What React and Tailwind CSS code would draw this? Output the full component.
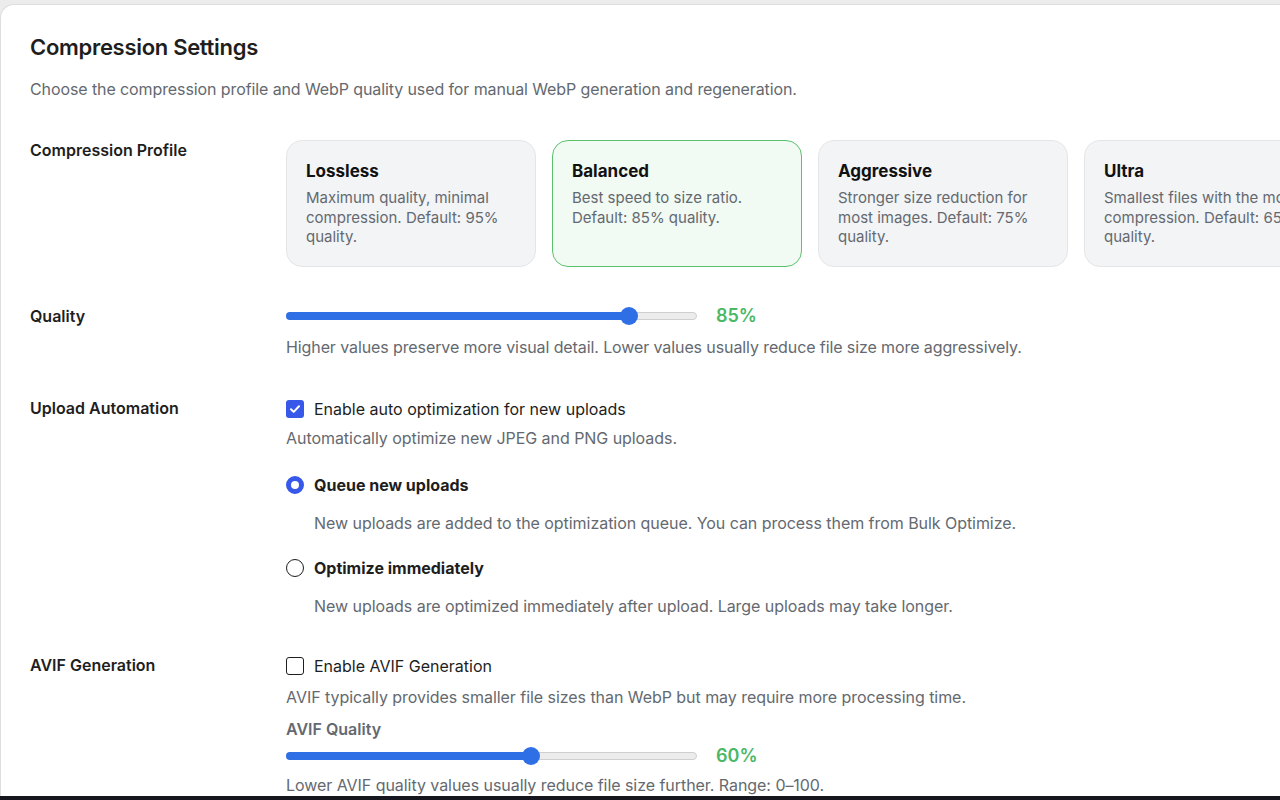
import React from "react";

const font = { fontFamily: "Inter, 'Noto Sans', 'Liberation Sans', sans-serif" };

function Slider({ value }) {
  const pos = 9 + (value / 100) * 393;
  return (
    <div className="flex items-center h-5">
      <div className="relative w-[411px] h-5">
        <div className="absolute left-0 right-0 top-[6px] h-[8px] rounded-full bg-[#ececec] border border-[#cfcfcf]" />
        <div className="absolute left-0 top-[6px] h-[8px] rounded-full bg-[#2f6fe6]" style={{ width: pos + "px" }} />
        <div className="absolute top-[1px] w-[18px] h-[18px] rounded-full bg-[#2f6fe6]" style={{ left: pos - 9 + "px" }} />
      </div>
      <span className="ml-[19px] text-[18px] font-semibold text-[#4ab866] leading-5">{value}%</span>
    </div>
  );
}

function Card({ title, desc, active }) {
  return (
    <div
      className={
        "w-[250px] h-[127px] shrink-0 rounded-[16px] border px-[19px] pt-[19px] " +
        (active ? "bg-[#f1faf3] border-[#5cc16d]" : "bg-[#f3f4f6] border-[#e4e5e7]")
      }
    >
      <div className="text-[17px] font-bold text-[#111] leading-[22px]">{title}</div>
      <div className="mt-[6px] text-[15px] leading-[19.7px] text-[#646970]">{desc}</div>
    </div>
  );
}

function Check({ checked }) {
  return checked ? (
    <span className="w-[18px] h-[18px] rounded-[3px] bg-[#3858e9] flex items-center justify-center shrink-0">
      <svg width="14" height="14" viewBox="0 0 14 14" fill="none">
        <path d="M3 7.2l2.7 2.7L11 4.3" stroke="white" strokeWidth="2" strokeLinecap="round" strokeLinejoin="round" />
      </svg>
    </span>
  ) : (
    <span className="w-[18px] h-[18px] rounded-[3px] border-[1.5px] border-[#1e1e1e] bg-white shrink-0" />
  );
}

function Radio({ checked }) {
  return checked ? (
    <span className="w-[18px] h-[18px] rounded-full border-[5px] border-[#3858e9] bg-white shrink-0" />
  ) : (
    <span className="w-[18px] h-[18px] rounded-full border-[1.5px] border-[#1e1e1e] bg-white shrink-0" />
  );
}

function Row({ label, children, className }) {
  return (
    <div className={"flex " + (className || "")}>
      <div className="w-[256px] shrink-0 text-[16px] font-semibold text-[#1e1e1e] leading-5">{label}</div>
      <div className="flex-1 min-w-0">{children}</div>
    </div>
  );
}

export default function App() {
  return (
    <div className="w-[1280px] h-[800px] bg-[#ececec] flex flex-col overflow-hidden" style={font}>
      <div className="h-[4px] shrink-0" />
      <div className="flex-1 bg-white rounded-tl-[14px] border-l border-t border-[#dedede] overflow-hidden pl-[29px] pt-[28px]">
        <h1 className="text-[22px] font-semibold text-[#1e1e1e] leading-7 tracking-[-0.3px]">Compression Settings</h1>
        <p className="mt-[16px] text-[16px] leading-6 text-[#646970] tracking-[-0.1px]">
          Choose the compression profile and WebP quality used for manual WebP generation and regeneration.
        </p>

        <Row label="Compression Profile" className="mt-[39px]">
          <div className="flex gap-4">
            <Card title="Lossless" desc="Maximum quality, minimal compression. Default: 95% quality." />
            <Card title="Balanced" desc="Best speed to size ratio. Default: 85% quality." active />
            <Card title="Aggressive" desc="Stronger size reduction for most images. Default: 75% quality." />
            <Card title="Ultra" desc="Smallest files with the most compression. Default: 65% quality." />
          </div>
        </Row>

        <Row label="Quality" className="mt-[39px]">
          <Slider value={85} />
          <p className="mt-[10px] text-[16px] leading-[22px] text-[#646970] tracking-[-0.1px]">
            Higher values preserve more visual detail. Lower values usually reduce file size more aggressively.
          </p>
        </Row>

        <Row label="Upload Automation" className="mt-[40px]">
          <label className="flex items-center gap-[10px] h-[22px]">
            <Check checked />
            <span className="text-[16px] text-[#1e1e1e]">Enable auto optimization for new uploads</span>
          </label>
          <p className="mt-[7px] text-[16px] leading-[22px] text-[#646970] tracking-[-0.05px]">Automatically optimize new JPEG and PNG uploads.</p>

          <label className="mt-[25px] flex items-center gap-[10px] h-[22px]">
            <Radio checked />
            <span className="text-[16px] font-bold text-[#1e1e1e]">Queue new uploads</span>
          </label>
          <p className="mt-[16px] ml-[28px] text-[16px] leading-[22px] text-[#646970] tracking-[-0.05px]">
            New uploads are added to the optimization queue. You can process them from Bulk Optimize.
          </p>

          <label className="mt-[23px] flex items-center gap-[10px] h-[22px]">
            <Radio />
            <span className="text-[16px] font-bold text-[#1e1e1e]">Optimize immediately</span>
          </label>
          <p className="mt-[16px] ml-[28px] text-[16px] leading-[22px] text-[#646970] tracking-[-0.05px]">
            New uploads are optimized immediately after upload. Large uploads may take longer.
          </p>
        </Row>

        <Row label="AVIF Generation" className="mt-[38px]">
          <label className="flex items-center gap-[10px] h-[22px]">
            <Check />
            <span className="text-[16px] text-[#1e1e1e]">Enable AVIF Generation</span>
          </label>
          <p className="mt-[9px] text-[16px] leading-[22px] text-[#646970] tracking-[-0.05px]">
            AVIF typically provides smaller file sizes than WebP but may require more processing time.
          </p>
          <div className="mt-[10px] text-[16px] font-semibold leading-[22px] text-[#646970]">AVIF Quality</div>
          <div className="mt-[6px]">
            <Slider value={60} />
          </div>
          <p className="mt-[8px] text-[16px] leading-[22px] text-[#646970] tracking-[-0.05px]">
            Lower AVIF quality values usually reduce file size further. Range: 0–100.
          </p>
        </Row>
      </div>
      <div className="h-[4px] shrink-0 bg-[#16161e]" />
    </div>
  );
}
